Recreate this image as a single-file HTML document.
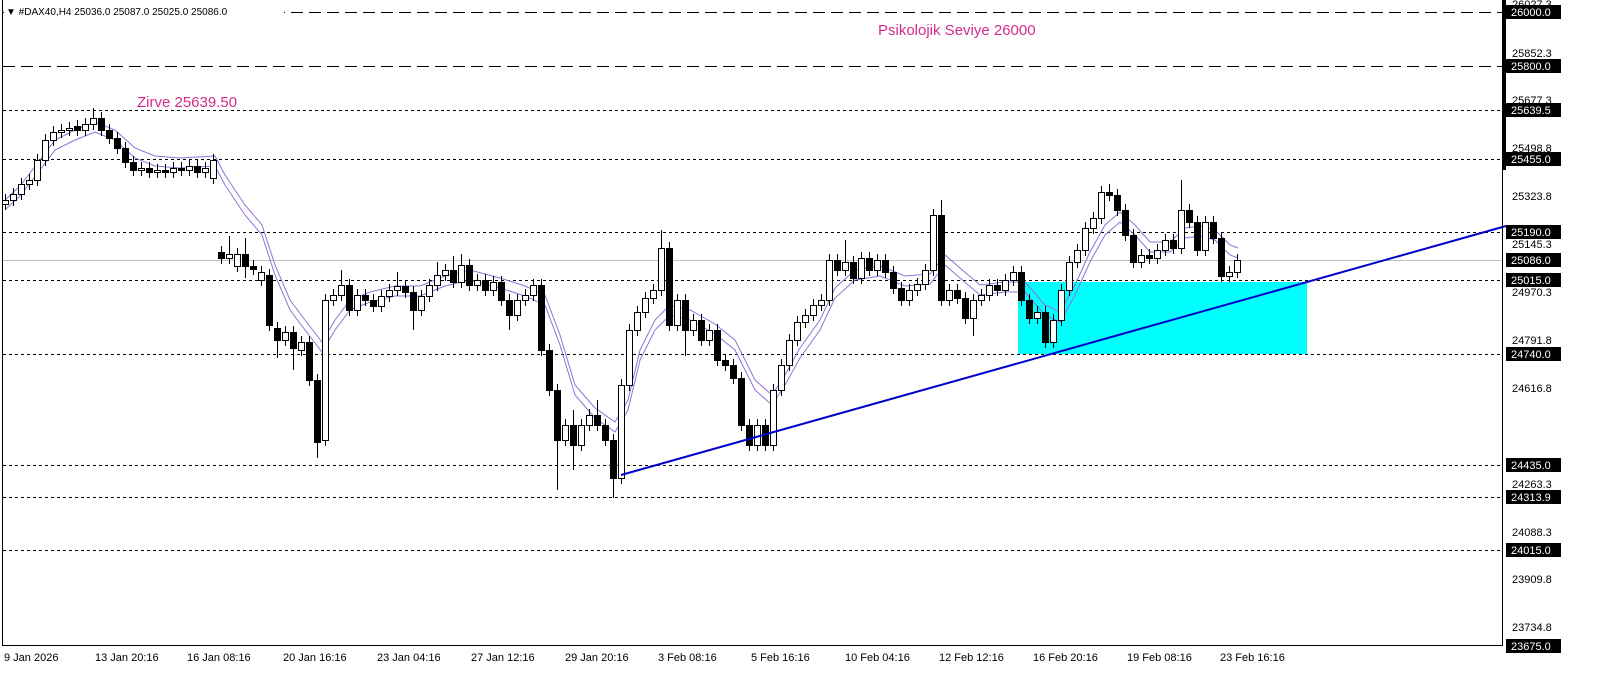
<!DOCTYPE html>
<html><head><meta charset="utf-8"><style>
body{margin:0;background:#fff;width:1606px;height:684px;overflow:hidden;font-family:"Liberation Sans",sans-serif}
svg{position:absolute;left:0;top:0}
.w{fill:#fff;stroke:#000}.b{fill:#000;stroke:#000}
</style></head><body>
<svg width="1606" height="684" xmlns="http://www.w3.org/2000/svg">
<rect x="1018" y="282" width="289" height="72" fill="#00ffff"/>
<g stroke="#000" stroke-width="1">
<line x1="3" y1="12.5" x2="1502" y2="12.5" stroke-dasharray="12,6"/>
<line x1="3" y1="66.5" x2="1502" y2="66.5" stroke-dasharray="12,6"/>
<g stroke-dasharray="3,3">
<line x1="3" y1="110.5" x2="1502" y2="110.5"/>
<line x1="3" y1="159.5" x2="1502" y2="159.5"/>
<line x1="3" y1="232.5" x2="1502" y2="232.5"/>
<line x1="3" y1="280.5" x2="1502" y2="280.5"/>
<line x1="3" y1="354.5" x2="1502" y2="354.5"/>
<line x1="3" y1="465.5" x2="1502" y2="465.5"/>
<line x1="3" y1="497.5" x2="1502" y2="497.5"/>
<line x1="3" y1="550.5" x2="1502" y2="550.5"/>
</g>
</g>
<line x1="3" y1="260.5" x2="1502" y2="260.5" stroke="#c0c0c0"/>
<g fill="none" stroke="#9370db">
<polyline points="5,210 20,196 40,170 55,150 75,140 95,132 115,140 135,158 155,166 180,168 215,166 225,185 245,215 262,235 275,275 290,310 305,330 322,352 335,330 350,310 370,302 395,296 420,296 445,286 470,280 500,288 525,296 545,305 560,345 575,395 595,418 615,432 628,410 640,360 655,330 670,315 690,320 715,334 735,350 755,390 772,405 785,385 800,358 820,330 835,298 855,280 880,276 905,286 930,284 945,265 960,278 980,295 1005,292 1025,292 1045,315 1060,322 1075,295 1090,262 1105,235 1120,222 1135,235 1150,252 1170,252 1185,238 1200,236 1215,240 1230,255 1238,258"/>
<polyline points="5,200 20,186 40,160 55,140 75,130 95,122 115,130 135,148 155,156 180,158 215,156 225,175 245,205 262,225 275,265 290,300 305,320 322,342 335,320 350,300 370,292 395,286 420,286 445,276 470,270 500,278 525,286 545,295 560,335 575,385 595,408 615,422 628,400 640,350 655,320 670,305 690,310 715,324 735,340 755,380 772,395 785,375 800,348 820,320 835,288 855,270 880,266 905,276 930,274 945,255 960,268 980,285 1005,282 1025,282 1045,305 1060,312 1075,285 1090,252 1105,225 1120,212 1135,225 1150,242 1170,242 1185,228 1200,226 1215,230 1230,245 1238,248"/>
</g>
<path stroke="#000" fill="none" d="M5.5,194V210M13.5,188V206M21.5,178V200M29.5,174V190M37.5,154V186M45.5,134V166M53.5,126V146M61.5,124V138M69.5,122V136M77.5,120V136M85.5,118V136M93.5,108V130M101.5,112V136M109.5,124V144M117.5,132V154M125.5,142V168M133.5,156V176M141.5,162V176M149.5,162V178M157.5,164V178M165.5,164V178M173.5,162V178M181.5,162V176M189.5,160V176M197.5,160V178M205.5,162V178M213.5,154V184M221.5,246V264M229.5,236V264M237.5,248V272M245.5,238V278M253.5,260V275M261.5,266V286M269.5,269V331M277.5,322V358M285.5,326V346M293.5,326V370M301.5,336V356M309.5,336V386M317.5,374V458M325.5,294V446M333.5,289V306M341.5,270V301M349.5,279V316M357.5,289V316M365.5,289V306M373.5,294V312M381.5,290V312M389.5,284V302M397.5,272V296M405.5,280V298M413.5,286V330M421.5,290V316M429.5,279V302M437.5,262V291M445.5,264V281M453.5,256V288M461.5,254V288M469.5,259V291M477.5,274V291M485.5,274V296M493.5,276V296M501.5,276V306M509.5,294V330M517.5,294V321M525.5,289V306M533.5,279V301M541.5,279V356M549.5,344V396M557.5,384V490M565.5,419V446M573.5,410V470M581.5,419V451M589.5,409V431M597.5,400V431M605.5,419V446M613.5,434V498M621.5,379V484M629.5,324V391M637.5,306V336M645.5,292V318M653.5,284V304M661.5,230V296M669.5,242V331M677.5,294V331M685.5,294V356M693.5,314V336M701.5,314V346M709.5,324V346M717.5,324V366M725.5,354V371M733.5,359V384M741.5,372V431M749.5,419V451M757.5,419V451M765.5,419V451M773.5,384V451M781.5,359V396M789.5,334V371M797.5,316V346M805.5,309V328M813.5,299V321M821.5,294V311M829.5,254V306M837.5,254V276M845.5,240V276M853.5,256V284M861.5,252V284M869.5,252V276M877.5,254V276M885.5,254V278M893.5,266V294M901.5,282V306M909.5,284V306M917.5,278V296M925.5,264V290M933.5,209V276M941.5,200V306M949.5,284V306M957.5,284V304M965.5,292V324M973.5,294V336M981.5,289V306M989.5,279V301M997.5,279V296M1005.5,274V296M1013.5,266V286M1021.5,266V306M1029.5,294V324M1037.5,306V324M1045.5,306V348M1053.5,314V348M1061.5,284V326M1069.5,256V296M1077.5,244V268M1085.5,222V256M1093.5,212V234M1101.5,186V224M1109.5,184V201M1117.5,189V216M1125.5,204V241M1133.5,229V268M1141.5,249V268M1149.5,249V264M1157.5,244V264M1165.5,234V256M1173.5,234V254M1181.5,180V254M1189.5,204V228M1197.5,216V256M1205.5,216V256M1213.5,216V244M1221.5,232V282M1229.5,266V282M1237.5,254V278"/>
<g>
<rect class="w" x="2.5" y="200.5" width="6" height="4"/><rect class="w" x="10.5" y="194.5" width="6" height="6"/><rect class="w" x="18.5" y="184.5" width="6" height="10"/><rect class="w" x="26.5" y="180.5" width="6" height="4"/><rect class="w" x="34.5" y="160.5" width="6" height="20"/><rect class="w" x="42.5" y="140.5" width="6" height="20"/><rect class="w" x="50.5" y="132.5" width="6" height="8"/><rect class="w" x="58.5" y="130.5" width="6" height="2"/><rect class="w" x="66.5" y="128.5" width="6" height="2"/><rect class="b" x="74.5" y="126.5" width="6" height="4"/><rect class="w" x="82.5" y="124.5" width="6" height="6"/><rect class="w" x="90.5" y="118.5" width="6" height="6"/><rect class="b" x="98.5" y="118.5" width="6" height="12"/><rect class="b" x="106.5" y="130.5" width="6" height="8"/><rect class="b" x="114.5" y="138.5" width="6" height="10"/><rect class="b" x="122.5" y="148.5" width="6" height="14"/><rect class="b" x="130.5" y="162.5" width="6" height="8"/><rect class="w" x="138.5" y="168.5" width="6" height="2"/><rect class="b" x="146.5" y="168.5" width="6" height="4"/><rect class="w" x="154.5" y="170.5" width="6" height="2"/><rect class="b" x="162.5" y="170.5" width="6" height="2"/><rect class="w" x="170.5" y="168.5" width="6" height="4"/><rect class="b" x="178.5" y="168.5" width="6" height="2"/><rect class="w" x="186.5" y="166.5" width="6" height="4"/><rect class="b" x="194.5" y="166.5" width="6" height="6"/><rect class="w" x="202.5" y="168.5" width="6" height="4"/><rect class="w" x="210.5" y="160.5" width="6" height="18"/>
<rect class="b" x="218.5" y="252.5" width="6" height="6"/><rect class="w" x="226.5" y="254.5" width="6" height="4"/><rect class="w" x="234.5" y="254.5" width="6" height="12"/><rect class="b" x="242.5" y="254.5" width="6" height="12"/><rect class="b" x="250.5" y="266.5" width="6" height="3"/><rect class="w" x="258.5" y="272.5" width="6" height="8"/><rect class="b" x="266.5" y="275.5" width="6" height="50"/><rect class="b" x="274.5" y="328.5" width="6" height="12"/><rect class="w" x="282.5" y="332.5" width="6" height="8"/><rect class="b" x="290.5" y="332.5" width="6" height="16"/><rect class="w" x="298.5" y="342.5" width="6" height="8"/><rect class="b" x="306.5" y="342.5" width="6" height="38"/><rect class="b" x="314.5" y="380.5" width="6" height="62"/><rect class="w" x="322.5" y="300.5" width="6" height="140"/><rect class="w" x="330.5" y="295.5" width="6" height="5"/><rect class="w" x="338.5" y="285.5" width="6" height="10"/><rect class="b" x="346.5" y="285.5" width="6" height="25"/><rect class="w" x="354.5" y="295.5" width="6" height="15"/><rect class="b" x="362.5" y="295.5" width="6" height="5"/><rect class="b" x="370.5" y="300.5" width="6" height="6"/><rect class="w" x="378.5" y="296.5" width="6" height="10"/><rect class="w" x="386.5" y="290.5" width="6" height="6"/><rect class="w" x="394.5" y="286.5" width="6" height="4"/><rect class="b" x="402.5" y="286.5" width="6" height="6"/><rect class="b" x="410.5" y="292.5" width="6" height="18"/><rect class="w" x="418.5" y="296.5" width="6" height="14"/><rect class="w" x="426.5" y="285.5" width="6" height="11"/><rect class="w" x="434.5" y="275.5" width="6" height="10"/><rect class="w" x="442.5" y="270.5" width="6" height="5"/><rect class="b" x="450.5" y="270.5" width="6" height="12"/><rect class="w" x="458.5" y="265.5" width="6" height="17"/><rect class="b" x="466.5" y="265.5" width="6" height="20"/><rect class="w" x="474.5" y="280.5" width="6" height="5"/><rect class="b" x="482.5" y="280.5" width="6" height="10"/><rect class="w" x="490.5" y="282.5" width="6" height="8"/><rect class="b" x="498.5" y="282.5" width="6" height="18"/><rect class="b" x="506.5" y="300.5" width="6" height="15"/><rect class="w" x="514.5" y="300.5" width="6" height="15"/><rect class="w" x="522.5" y="295.5" width="6" height="5"/><rect class="w" x="530.5" y="285.5" width="6" height="10"/><rect class="b" x="538.5" y="285.5" width="6" height="65"/><rect class="b" x="546.5" y="350.5" width="6" height="40"/><rect class="b" x="554.5" y="390.5" width="6" height="50"/><rect class="w" x="562.5" y="425.5" width="6" height="15"/><rect class="b" x="570.5" y="425.5" width="6" height="20"/><rect class="w" x="578.5" y="425.5" width="6" height="20"/><rect class="w" x="586.5" y="415.5" width="6" height="10"/><rect class="b" x="594.5" y="415.5" width="6" height="10"/><rect class="b" x="602.5" y="425.5" width="6" height="15"/><rect class="b" x="610.5" y="440.5" width="6" height="38"/><rect class="w" x="618.5" y="385.5" width="6" height="93"/><rect class="w" x="626.5" y="330.5" width="6" height="55"/><rect class="w" x="634.5" y="312.5" width="6" height="18"/><rect class="w" x="642.5" y="298.5" width="6" height="14"/><rect class="w" x="650.5" y="290.5" width="6" height="8"/><rect class="w" x="658.5" y="248.5" width="6" height="42"/><rect class="b" x="666.5" y="248.5" width="6" height="77"/><rect class="w" x="674.5" y="300.5" width="6" height="25"/><rect class="b" x="682.5" y="300.5" width="6" height="30"/><rect class="w" x="690.5" y="320.5" width="6" height="10"/><rect class="b" x="698.5" y="320.5" width="6" height="20"/><rect class="w" x="706.5" y="330.5" width="6" height="10"/><rect class="b" x="714.5" y="330.5" width="6" height="30"/><rect class="b" x="722.5" y="360.5" width="6" height="5"/><rect class="b" x="730.5" y="365.5" width="6" height="13"/><rect class="b" x="738.5" y="378.5" width="6" height="47"/><rect class="b" x="746.5" y="425.5" width="6" height="20"/><rect class="w" x="754.5" y="425.5" width="6" height="20"/><rect class="b" x="762.5" y="425.5" width="6" height="20"/><rect class="w" x="770.5" y="390.5" width="6" height="55"/><rect class="w" x="778.5" y="365.5" width="6" height="25"/><rect class="w" x="786.5" y="340.5" width="6" height="25"/><rect class="w" x="794.5" y="322.5" width="6" height="18"/><rect class="w" x="802.5" y="315.5" width="6" height="7"/><rect class="w" x="810.5" y="305.5" width="6" height="10"/><rect class="w" x="818.5" y="300.5" width="6" height="5"/><rect class="w" x="826.5" y="260.5" width="6" height="40"/><rect class="b" x="834.5" y="260.5" width="6" height="10"/><rect class="w" x="842.5" y="262.5" width="6" height="8"/><rect class="b" x="850.5" y="262.5" width="6" height="16"/><rect class="w" x="858.5" y="258.5" width="6" height="20"/><rect class="b" x="866.5" y="258.5" width="6" height="12"/><rect class="w" x="874.5" y="260.5" width="6" height="10"/><rect class="b" x="882.5" y="260.5" width="6" height="12"/><rect class="b" x="890.5" y="272.5" width="6" height="16"/><rect class="b" x="898.5" y="288.5" width="6" height="12"/><rect class="w" x="906.5" y="290.5" width="6" height="10"/><rect class="w" x="914.5" y="284.5" width="6" height="6"/><rect class="w" x="922.5" y="270.5" width="6" height="14"/><rect class="w" x="930.5" y="215.5" width="6" height="55"/><rect class="b" x="938.5" y="215.5" width="6" height="85"/><rect class="w" x="946.5" y="290.5" width="6" height="10"/><rect class="b" x="954.5" y="290.5" width="6" height="8"/><rect class="b" x="962.5" y="298.5" width="6" height="20"/><rect class="w" x="970.5" y="300.5" width="6" height="18"/><rect class="w" x="978.5" y="295.5" width="6" height="5"/><rect class="w" x="986.5" y="285.5" width="6" height="10"/><rect class="b" x="994.5" y="285.5" width="6" height="5"/><rect class="w" x="1002.5" y="280.5" width="6" height="10"/><rect class="w" x="1010.5" y="272.5" width="6" height="8"/><rect class="b" x="1018.5" y="272.5" width="6" height="28"/><rect class="b" x="1026.5" y="300.5" width="6" height="18"/><rect class="w" x="1034.5" y="312.5" width="6" height="6"/><rect class="b" x="1042.5" y="312.5" width="6" height="30"/><rect class="w" x="1050.5" y="320.5" width="6" height="22"/><rect class="w" x="1058.5" y="290.5" width="6" height="30"/><rect class="w" x="1066.5" y="262.5" width="6" height="28"/><rect class="w" x="1074.5" y="250.5" width="6" height="12"/><rect class="w" x="1082.5" y="228.5" width="6" height="22"/><rect class="w" x="1090.5" y="218.5" width="6" height="10"/><rect class="w" x="1098.5" y="192.5" width="6" height="26"/><rect class="b" x="1106.5" y="192.5" width="6" height="3"/><rect class="b" x="1114.5" y="195.5" width="6" height="15"/><rect class="b" x="1122.5" y="210.5" width="6" height="25"/><rect class="b" x="1130.5" y="235.5" width="6" height="27"/><rect class="w" x="1138.5" y="255.5" width="6" height="7"/><rect class="b" x="1146.5" y="255.5" width="6" height="3"/><rect class="w" x="1154.5" y="250.5" width="6" height="8"/><rect class="w" x="1162.5" y="240.5" width="6" height="10"/><rect class="b" x="1170.5" y="240.5" width="6" height="8"/><rect class="w" x="1178.5" y="210.5" width="6" height="38"/><rect class="b" x="1186.5" y="210.5" width="6" height="12"/><rect class="b" x="1194.5" y="222.5" width="6" height="28"/><rect class="w" x="1202.5" y="222.5" width="6" height="28"/><rect class="b" x="1210.5" y="222.5" width="6" height="16"/><rect class="b" x="1218.5" y="238.5" width="6" height="38"/><rect class="w" x="1226.5" y="272.5" width="6" height="4"/><rect class="w" x="1234.5" y="260.5" width="6" height="12"/>
</g>
<line x1="621" y1="475" x2="1506" y2="226" stroke="#0000cc" stroke-width="2"/>
<line x1="2.5" y1="0" x2="2.5" y2="646" stroke="#000"/>
<line x1="1502.5" y1="0" x2="1502.5" y2="646" stroke="#000"/>
<line x1="2" y1="645.5" x2="1503" y2="645.5" stroke="#000"/>
<g font-size="11" fill="#000">
<text x="1512" y="8">26027.3</text><text x="1512" y="57">25852.3</text><text x="1512" y="104">25677.3</text>
<text x="1512" y="152">25498.8</text><text x="1512" y="200">25323.8</text><text x="1512" y="248">25145.3</text>
<text x="1512" y="296">24970.3</text><text x="1512" y="344">24791.8</text><text x="1512" y="392">24616.8</text>
<text x="1512" y="488">24263.3</text><text x="1512" y="536">24088.3</text><text x="1512" y="583">23909.8</text>
<text x="1512" y="631">23734.8</text>
</g>
<rect x="1502" y="0" width="4" height="170" fill="#000"/>
<g fill="#000">
<rect x="1506" y="5" width="55" height="14"/><rect x="1506" y="59" width="55" height="14"/><rect x="1506" y="103" width="55" height="14"/><rect x="1506" y="152" width="55" height="14"/><rect x="1506" y="225" width="55" height="14"/><rect x="1506" y="253" width="55" height="14"/><rect x="1506" y="273" width="55" height="14"/><rect x="1506" y="347" width="55" height="14"/><rect x="1506" y="458" width="55" height="14"/><rect x="1506" y="490" width="55" height="14"/><rect x="1506" y="543" width="55" height="14"/><rect x="1506" y="639" width="55" height="14"/>
</g>
<g font-size="11" fill="#fff">
<text x="1511" y="16">26000.0</text><text x="1511" y="70">25800.0</text><text x="1511" y="114">25639.5</text><text x="1511" y="163">25455.0</text><text x="1511" y="236">25190.0</text><text x="1511" y="264">25086.0</text><text x="1511" y="284">25015.0</text><text x="1511" y="358">24740.0</text><text x="1511" y="469">24435.0</text><text x="1511" y="501">24313.9</text><text x="1511" y="554">24015.0</text><text x="1511" y="650">23675.0</text>
</g>
<g font-size="11" fill="#000">
<text x="4" y="661">9 Jan 2026</text><text x="95" y="661">13 Jan 20:16</text><text x="187" y="661">16 Jan 08:16</text>
<text x="283" y="661">20 Jan 16:16</text><text x="377" y="661">23 Jan 04:16</text><text x="471" y="661">27 Jan 12:16</text>
<text x="565" y="661">29 Jan 20:16</text><text x="658" y="661">3 Feb 08:16</text><text x="751" y="661">5 Feb 16:16</text>
<text x="845" y="661">10 Feb 04:16</text><text x="939" y="661">12 Feb 12:16</text><text x="1033" y="661">16 Feb 20:16</text>
<text x="1127" y="661">19 Feb 08:16</text><text x="1220" y="661">23 Feb 16:16</text>
</g>
<rect x="4" y="5" width="280" height="13" fill="#fff"/>
<text x="6" y="15" font-size="10" fill="#000">▼ #DAX40,H4  25036.0 25087.0 25025.0 25086.0</text>
<text x="878" y="35" font-size="15" fill="#d42c8c">Psikolojik Seviye 26000</text>
<text x="137" y="107" font-size="15" fill="#d42c8c">Zirve 25639.50</text>
</svg>
</body></html>
